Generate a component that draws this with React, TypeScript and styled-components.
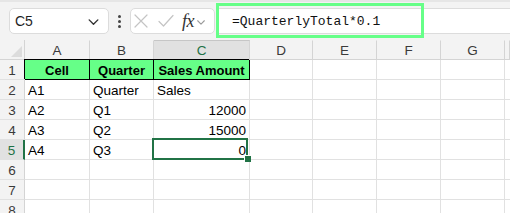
import React from "react";
import styled, { createGlobalStyle } from "styled-components";

const Global = createGlobalStyle`
  html, body { margin: 0; padding: 0; background: #ffffff; }
  body { font-family: "Liberation Sans", Arial, sans-serif; overflow: hidden; }
  * { box-sizing: border-box; }
`;

const Page = styled.div`
  width: 510px;
  height: 213px;
  overflow: hidden;
  display: flex;
  flex-direction: column;
`;

const Toolbar = styled.div`
  height: 40px;
  flex: none;
  display: flex;
  align-items: flex-start;
  padding: 6px 0 0 9px;
  background: #f3f3f3;
  border-top: 2px solid #e6e6e6;
`;

const NameBox = styled.div`
  width: 100px;
  height: 26px;
  background: #fff;
  border: 1px solid #dcdcdc;
  border-radius: 5px;
  display: flex;
  align-items: center;
  justify-content: space-between;
  padding: 0 8px 0 5px;
  font-size: 14px;
  color: #1f1f1f;
`;

const Dots = styled.div`
  width: 21px;
  height: 26px;
  display: flex;
  flex-direction: column;
  align-items: center;
  justify-content: center;
  gap: 2px;
  span {
    width: 3px;
    height: 3px;
    border-radius: 50%;
    background: #444;
  }
`;

const FxBox = styled.div`
  width: 85px;
  height: 26px;
  background: #fff;
  border: 1px solid #dcdcdc;
  border-radius: 5px;
  display: flex;
  align-items: center;
  padding: 0 0 0 2px;
`;

const IconSlot = styled.span<{ $ml?: number; $mt?: number }>`
  display: flex;
  margin-left: ${(p) => p.$ml ?? 0}px;
  margin-top: ${(p) => p.$mt ?? 0}px;
`;

const Fx = styled.span`
  font-family: "Liberation Serif", "Times New Roman", serif;
  font-style: italic;
  font-size: 18px;
  color: #333;
  margin-left: 7px;
  letter-spacing: -0.5px;
`;

const FormulaWrap = styled.div`
  flex: 1;
  height: 26px;
  margin-left: 1px;
  background: #fff;
  border-top: 1px solid #dcdcdc;
  border-bottom: 1px solid #dcdcdc;
  position: relative;
  display: flex;
  align-items: center;
  padding-left: 16px;
  font-family: "Liberation Mono", "Courier New", monospace;
  font-size: 13px;
  color: #111;
`;

const Highlight = styled.div`
  position: absolute;
  left: 0;
  top: -6px;
  width: 208px;
  height: 35px;
  border: 3px solid #66ff88;
  pointer-events: none;
`;

const Sheet = styled.div`
  display: grid;
  grid-template-columns: 25px 65px 64px 96px 63px 64px 64px 64px 5px;
  grid-auto-rows: 20px;
  font-size: 13.5px;
  color: #000;
`;

const Corner = styled.div`
  background: #f3f3f3;
  border-right: 1px solid #d4d4d4;
  border-bottom: 1px solid #d4d4d4;
  position: relative;
  &::after {
    content: "";
    position: absolute;
    right: 2px;
    bottom: 2px;
    width: 0;
    height: 0;
    border-left: 11px solid transparent;
    border-bottom: 11px solid #dcdcdc;
  }
`;

const ColHead = styled.div<{ $active?: boolean }>`
  background: ${(p) => (p.$active ? "#e1e1e1" : "#f3f3f3")};
  border-right: 1px solid #d4d4d4;
  border-bottom: 1px solid #d4d4d4;
  border-top: 1px solid ${(p) => (p.$active ? "#c6c6c6" : "#f3f3f3")};
  display: flex;
  align-items: center;
  justify-content: center;
  padding-top: 1px;
  font-size: 13.5px;
  color: ${(p) => (p.$active ? "#1e7145" : "#3a3a3a")};
`;

const RowHead = styled.div<{ $active?: boolean }>`
  background: ${(p) => (p.$active ? "#e1e1e1" : "#f3f3f3")};
  border-right: ${(p) => (p.$active ? "2px solid #217346" : "1px solid #d4d4d4")};
  border-bottom: 1px solid #e1e1e1;
  display: flex;
  align-items: center;
  justify-content: center;
  padding-top: 1px;
  font-size: 13.5px;
  color: ${(p) => (p.$active ? "#1e7145" : "#3a3a3a")};
`;

const Cell = styled.div<{ $align?: "left" | "right" | "center"; $head?: boolean; $selected?: boolean }>`
  position: relative;
  border-right: 1px solid ${(p) => (p.$head ? "#000" : "#e1e1e1")};
  border-bottom: 1px solid ${(p) => (p.$head ? "#000" : "#e1e1e1")};
  background: ${(p) => (p.$head ? "#66ff88" : "#fff")};
  box-shadow: ${(p) => (p.$head ? "-1px -1px 0 #000" : "none")};
  padding: 2px 3px 0 3px;
  line-height: 17px;
  white-space: nowrap;
  overflow: visible;
  text-align: ${(p) => p.$align ?? "left"};
  font-weight: ${(p) => (p.$head ? 700 : 400)};
  font-size: ${(p) => (p.$head ? "13px" : "13.5px")};
  ${(p) =>
    p.$selected
      ? `
    &::after {
      content: "";
      position: absolute;
      left: -2px;
      top: -2px;
      right: 1px;
      bottom: -1px;
      border: 2px solid #217346;
      pointer-events: none;
    }
    &::before {
      content: "";
      position: absolute;
      right: -2px;
      bottom: -3px;
      width: 6px;
      height: 6px;
      background: #217346;
      border-left: 1px solid #fff;
      border-top: 1px solid #fff;
      z-index: 2;
    }
  `
      : ""}
`;

const cols = ["A", "B", "C", "D", "E", "F", "G", ""];

type Row = { n: number; cells: { text?: string; align?: "left" | "right" | "center" }[]; head?: boolean };

const rows: Row[] = [
  { n: 1, head: true, cells: [{ text: "Cell", align: "center" }, { text: "Quarter", align: "center" }, { text: "Sales Amount", align: "center" }] },
  { n: 2, cells: [{ text: "A1" }, { text: "Quarter" }, { text: "Sales" }] },
  { n: 3, cells: [{ text: "A2" }, { text: "Q1" }, { text: "12000", align: "right" }] },
  { n: 4, cells: [{ text: "A3" }, { text: "Q2" }, { text: "15000", align: "right" }] },
  { n: 5, cells: [{ text: "A4" }, { text: "Q3" }, { text: "0", align: "right" }] },
  { n: 6, cells: [] },
  { n: 7, cells: [] },
  { n: 8, cells: [] },
];

const Chevron = ({ color = "#444", size = 12 }: { color?: string; size?: number }) => (
  <svg width={size} height={size} viewBox="0 0 12 12" fill="none">
    <path d="M2 4.5 L6 8.5 L10 4.5" stroke={color} strokeWidth="1.3" strokeLinecap="round" strokeLinejoin="round" />
  </svg>
);

export default function App() {
  return (
    <Page>
      <Global />
      <Toolbar>
        <NameBox>
          <span>C5</span>
          <Chevron color="#333" size={13} />
        </NameBox>
        <Dots>
          <span />
          <span />
          <span />
        </Dots>
        <FxBox>
          <svg width="16" height="16" viewBox="0 0 16 16" fill="none">
            <path d="M2 2 L14 14 M14 2 L2 14" stroke="#c4c4c4" strokeWidth="1.2" strokeLinecap="round" />
          </svg>
          <IconSlot $ml={8}>
            <svg width="18" height="16" viewBox="0 0 18 16" fill="none">
              <path d="M2 8.5 L6.5 13 L16 2.5" stroke="#c4c4c4" strokeWidth="1.2" strokeLinecap="round" strokeLinejoin="round" />
            </svg>
          </IconSlot>
          <Fx>fx</Fx>
          <IconSlot $ml={2} $mt={1}>
            <Chevron color="#9a9a9a" size={10} />
          </IconSlot>
        </FxBox>
        <FormulaWrap>
          <Highlight />
          =QuarterlyTotal*0.1
        </FormulaWrap>
      </Toolbar>
      <Sheet>
        <Corner />
        {cols.map((c, i) => (
          <ColHead key={i} $active={c === "C"}>
            {c}
          </ColHead>
        ))}
        {rows.map((r) => (
          <React.Fragment key={r.n}>
            <RowHead $active={r.n === 5}>{r.n}</RowHead>
            {cols.map((c, i) => {
              const cell = r.cells[i];
              const head = !!r.head && i < 3;
              return (
                <Cell key={i} $align={cell?.align} $head={head} $selected={r.n === 5 && c === "C"}>
                  {cell?.text}
                </Cell>
              );
            })}
          </React.Fragment>
        ))}
      </Sheet>
    </Page>
  );
}
